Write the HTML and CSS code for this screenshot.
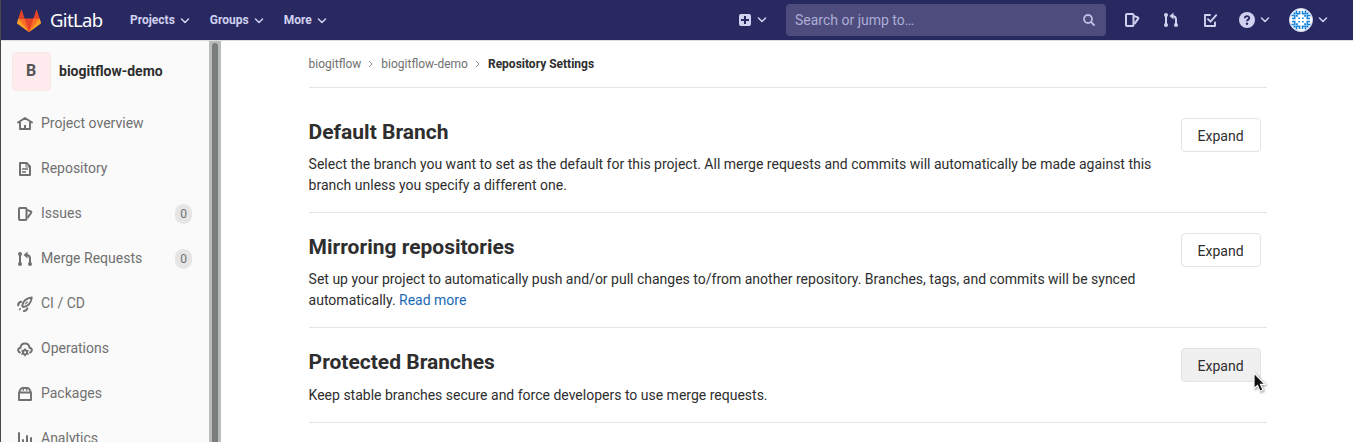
FILE: index.html
```html
<!DOCTYPE html>
<html lang="en">
<head>
<meta charset="utf-8">
<title>Repository Settings</title>
<link rel="stylesheet" href="styles.css">
</head>
<body>
<svg class="sprite" aria-hidden="true">
  <symbol id="chevron" viewBox="0 0 10 6"><path d="M1.500 1l3.500 3.500L8.500 1" fill="none" stroke="currentColor" stroke-width="1.500" stroke-linecap="round" stroke-linejoin="round"/></symbol>
  <symbol id="issues" viewBox="0 0 16 16"><path d="M3 2H8.500a1 1 0 0 1 1 1v10a1 1 0 0 1-1 1H3a1 1 0 0 1-1-1V3a1 1 0 0 1 1-1" fill="none" stroke="currentColor" stroke-width="2"/><path d="M10 4l3.800 1.400a.8.800 0 0 1 .4 1.200L10.500 11.800" fill="none" stroke="currentColor" stroke-width="2" stroke-linejoin="round"/></symbol>
  <symbol id="merge" viewBox="0 0 16 16"><g fill="none" stroke="currentColor" stroke-width="2"><path d="M3 3v10M13 13V7.500c0-2-.8-3.300-3.500-3.500"/></g><g fill="currentColor"><circle cx="3" cy="3" r="2"/><circle cx="3" cy="13" r="2"/><circle cx="13" cy="13" r="2"/><path d="M6.500 4l4-3.500v7z"/></g></symbol>
</svg>
<header class="navbar">
  <a class="brand">
    <svg class="tanuki" viewBox="0 0 36 34"><path fill="#e24329" d="M2 14l9.380 9v-9l-4-12.280c-.205-.632-1.176-.632-1.380 0zM34 14l-9.380 9v-9l4-12.280c.205-.632 1.176-.632 1.380 0zM18 34.380 3 14 33 14z"/><path fill="#fc6d26" d="M18 34.380 11.380 14 2 14 6 25zM18 34.380 24.620 14 34 14 30 25z"/><path fill="#fca326" d="M2 14 .1 20.160c-.18.565 0 1.200.5 1.560l17.420 12.660zM34 14l1.900 6.160c.18.565 0 1.200-.5 1.560L18 34.380z"/></svg>
    <span class="wordmark">GitLab</span>
  </a>
  <nav class="menus">
    <a>Projects<svg class="chev"><use href="#chevron"/></svg></a>
    <a>Groups<svg class="chev"><use href="#chevron"/></svg></a>
    <a>More<svg class="chev"><use href="#chevron"/></svg></a>
  </nav>
  <div class="tools">
    <a class="new"><svg class="plus" viewBox="0 0 12 12"><rect width="12" height="12" rx="2" fill="#d1d1f0"/><path d="M6 2v8M2 6h8" stroke="#292961" stroke-width="2"/></svg><svg class="chev"><use href="#chevron"/></svg></a>
    <div class="search"><span>Search or jump to…</span><svg width="12" height="12" viewBox="0 0 12 12" fill="none" stroke="currentColor" stroke-width="1.800"><circle cx="5" cy="5" r="4"/><path d="M8 8l3 3" stroke-linecap="round"/></svg></div>
    <svg class="ico i-issues"><use href="#issues"/></svg>
    <svg class="ico i-merge"><use href="#merge"/></svg>
    <svg class="ico i-todo" viewBox="0 0 16 16" fill="none" stroke="currentColor" stroke-width="1.900" stroke-linecap="round" stroke-linejoin="round"><path d="M8 3H3v11h10v-3.500"/><path d="M6 7.200l2.500 2.500L14.200 3.200"/></svg>
    <svg class="help" viewBox="0 0 16 16"><circle cx="8" cy="8" r="8" fill="#d1d1f0"/><path d="M5.800 6.200C5.900 3.400 10.300 3.500 10.200 6.100 10.100 7.700 8 7.600 8 9.300" fill="none" stroke="#292961" stroke-width="1.900"/><circle cx="8" cy="11.700" r="1.200" fill="#292961"/></svg>
    <svg class="chev c-help"><use href="#chevron"/></svg>
    <svg class="avatar" viewBox="0 0 24 24"><circle cx="12" cy="12" r="11.500" fill="#fff" stroke="#d1d1f0"/><g fill="none" stroke="#1683df" stroke-width="1.600"><path d="M7.500 2.500v3.200h3V3M13.500 3v2.700h3V2.500M7.500 21.500v-3.200h3V21M13.500 21v-2.700h3v3.200M2.500 7.500h3.200v3H3M3 13.500h2.700v3H2.500M21.500 7.500h-3.200v3H21M21 13.500h-2.700v3h3.200"/></g><g fill="#1683df"><path d="M4.500 4.500h2.100v2.100H4.500zM17.400 4.500h2.100v2.100h-2.100zM4.500 17.400h2.100v2.100H4.500zM17.400 17.400h2.100v2.100h-2.100zM7 7h1.800v1.800H7zM15.200 7H17v1.800h-1.800zM7 15.200h1.800V17H7zM15.200 15.200H17V17h-1.800zM9.400 9.400h1.500v1.500H9.400zM13.100 9.400h1.500v1.500h-1.500zM9.400 13.100h1.500v1.500H9.400zM13.100 13.100h1.500v1.500h-1.500z"/></g></svg>
    <svg class="chev c-user"><use href="#chevron"/></svg>
  </div>
</header>
<div class="page">
  <aside class="sidebar">
    <div class="project"><span class="letter">B</span><strong>biogitflow-demo</strong></div>
    <ul>
      <li><svg viewBox="0 0 16 16" fill="none" stroke="currentColor" stroke-width="1.900" stroke-linecap="round" stroke-linejoin="round"><path d="M1 6.500L8 2 15 6.500M3 6.500V13h10V6.500"/><path d="M8 9v3.500" stroke-width="2" stroke-linecap="butt"/></svg>Project overview</li>
      <li><svg viewBox="0 0 16 16" fill="none" stroke="currentColor" stroke-width="2" stroke-linejoin="round"><path d="M3 2h6.500L13 5.500V14H3z"/><path d="M5 8h6M5 11h4" stroke-width="1.500"/><path d="M9 2v4h4" stroke-width="1"/></svg>Repository</li>
      <li><svg><use href="#issues"/></svg>Issues<span class="count">0</span></li>
      <li><svg><use href="#merge"/></svg>Merge Requests<span class="count">0</span></li>
      <li><svg viewBox="0 0 16 16" fill="none" stroke="currentColor" stroke-width="1.900" stroke-linejoin="round" stroke-linecap="round"><path d="M6.300 11L5.200 9.800C6 5.500 9.500 2 14.800 1.500 14.300 6.500 11 10.200 6.300 11z"/><path d="M10.300 6L8.500 7.800" stroke-width="1.200"/><path d="M4 5.800C2.400 6.200 1.300 7.500 1.200 9.200M10.300 12.500C9.800 13.900 8.600 14.700 7 15" stroke-width="2.200"/><path d="M3.300 12.700L2.500 13.500" stroke-width="1.500"/></svg>CI / CD</li>
      <li><svg viewBox="0 0 16 16" fill="none" stroke="currentColor" stroke-width="1.900" stroke-linecap="round"><path d="M3 11.500C.3 10.500.6 7 3.500 6.700 4.200 1 11.800 1 12.500 6.700 15.400 7 15.700 10.500 13 11.500"/><circle cx="8" cy="11.300" r="2.100"/><path d="M8 8v.4M8 14.200v.5M5 9.600l.3.200M10.700 12.800l.3.200M5 13l.3-.2M10.700 9.800l.3-.2" stroke-width="1.600"/></svg>Operations</li>
      <li><svg viewBox="0 0 16 16" fill="none" stroke="currentColor" stroke-width="1.900" stroke-linejoin="round"><path d="M2 6.500h12V14H2zM2.300 6C3 3.500 4.500 2 6 2h4c1.500 0 3 1.500 3.700 4"/><path d="M6.300 2v2.700M9.700 2v2.700" stroke-width="1.300"/></svg>Packages</li>
      <li><svg viewBox="0 0 16 16" fill="none" stroke="currentColor" stroke-width="2" stroke-linecap="round"><path d="M2 2v11a1 1 0 0 0 1 1h12M6 9v2M10 5v6M14 7v4"/></svg>Analytics</li>
    </ul>
  </aside>
  <div class="scrollbar"><div class="thumb"></div></div>
  <main>
    <nav class="crumbs"><a>biogitflow</a><svg viewBox="0 0 5 8"><path d="M1 1l3 3-3 3"/></svg><a>biogitflow-demo</a><svg viewBox="0 0 5 8"><path d="M1 1l3 3-3 3"/></svg><strong>Repository Settings</strong></nav>
    <section>
      <div class="text"><h4>Default Branch</h4><p>Select the branch you want to set as the default for this project. All merge requests and commits will automatically be made against this<br>branch unless you specify a different one.</p></div>
      <button>Expand</button>
    </section>
    <section>
      <div class="text"><h4>Mirroring repositories</h4><p>Set up your project to automatically push and/or pull changes to/from another repository. Branches, tags, and commits will be synced<br>automatically. <a class="link">Read more</a></p></div>
      <button>Expand</button>
    </section>
    <section>
      <div class="text"><h4>Protected Branches</h4><p class="single">Keep stable branches secure and force developers to use merge requests.</p></div>
      <button class="hovered">Expand</button>
    </section>
  </main>
</div>
<svg class="cursor" viewBox="0 0 14 21"><path d="M1 1v15.500l3.500-3 2.500 5.700 3-1.300-2.500-5.500H12z" fill="#111" stroke="#fff" stroke-width="1.200"/></svg>
</body>
</html>
```
FILE: styles.css
```css
* { box-sizing: border-box; }
body {
  margin: 0;
  height: 442px;
  overflow: hidden;
  border-left: 1px solid #48484a;
  background: #fff;
  color: #2e2e2e;
  font: 14px/21px Roboto, sans-serif;
}
.sprite { display: none; }
svg { flex: none; }

.navbar {
  display: flex;
  align-items: center;
  height: 41px;
  background: #292961;
  border-bottom: 1px solid #dcdce4;
  color: #d1d1f0;
}
.brand { display: flex; align-items: center; width: 129px; padding-left: 16px; }
.tanuki { width: 24px; height: 23px; }
.wordmark { margin-left: 9px; color: #fff; font: 18.5px/24px "Noto Sans", sans-serif; letter-spacing: -0.65px; }
.menus { display: flex; gap: 20px; padding-top: 1px; font-weight: 700; font-size: 12px; }
.menus a { display: flex; align-items: center; }
.chev { width: 10px; height: 6px; margin-left: 5px; }
.tools { display: flex; align-items: center; margin-left: auto; padding-right: 25px; }
.new { display: flex; align-items: center; margin-right: 19px; }
.plus { width: 12px; height: 12px; }
.new .chev { margin-left: 6px; }
.search {
  display: flex;
  align-items: center;
  justify-content: space-between;
  width: 320px;
  height: 32px;
  padding: 0 11px 0 9px;
  border-radius: 4px;
  background: #4d4c7d;
  color: #adadd6;
}
.search span { padding-top: 1px; }
.search svg { color: #bdbde2; }
.ico { width: 16px; height: 16px; }
.i-issues { margin-left: 18px; }
.i-merge { margin-left: 23px; }
.i-todo { margin-left: 23px; }
.help { width: 16px; height: 16px; margin-left: 21px; }
.avatar { width: 24px; height: 24px; margin-left: 19px; }

.page { display: flex; height: 401px; }
.sidebar { width: 208px; background: #fafafa; color: #707070; overflow: hidden; }
.project { display: flex; align-items: center; height: 60px; padding-left: 10.5px; color: #2e2e2e; }
.project strong { margin-left: 8.5px; font-weight: 700; }
.letter {
  width: 39px;
  height: 39px;
  border: 1px solid #f8e6e8;
  border-radius: 4px;
  background: #ffebee;
  color: #555;
  font: 700 16px/36px Roboto, sans-serif;
  text-align: center;
}
.sidebar ul { margin: 0; padding: 0; list-style: none; }
.sidebar li { display: flex; align-items: center; height: 45px; padding: 0 17px 0 16px; }
.sidebar li svg { width: 16px; height: 16px; margin-right: 8px; }
.count {
  width: 17px;
  height: 20px;
  margin-left: auto;
  border-radius: 10px;
  background: #e5e5e5;
  font-size: 12px;
  line-height: 20px;
  text-align: center;
}
.scrollbar { width: 12px; padding: 2px 3px 0; background: #b9bcbb; }
.thumb { height: 420px; border-radius: 3px; background: #797e7d; }

main { width: 958px; margin-left: 87.6px; }
.crumbs {
  display: flex;
  align-items: center;
  height: 47px;
  border-bottom: 1px solid #e5e5e5;
  color: #707070;
  font-size: 12px;
}
.crumbs svg { width: 5px; height: 8px; margin: 0 8px 0 7px; fill: none; stroke: #919191; }
.crumbs strong { color: #2e2e2e; font-weight: 700; }
section {
  display: flex;
  align-items: flex-start;
  justify-content: space-between;
  padding: 30px 6px 16px 0;
  border-bottom: 1px solid #e5e5e5;
}
section + section { padding-top: 20px; }
h4 { margin: 0 0 8px; padding-top: 1px; font-size: 21px; line-height: 27px; font-weight: 700; }
p { margin: 0; white-space: nowrap; }
.single { padding-top: 1px; }
.link { color: #1b69b6; }
button {
  width: 80px;
  height: 34px;
  padding: 2px 6px 0;
  border: 1px solid #e3e3e3;
  border-radius: 4px;
  background: #fff;
  color: #2e2e2e;
  font: 14px/20px Roboto, sans-serif;
}
button.hovered { background: #f0f0f0; }
.cursor { position: absolute; left: 1253px; top: 372px; width: 14px; height: 21px; filter: drop-shadow(1px 1px 1px rgba(0, 0, 0, 0.4)); }
```
